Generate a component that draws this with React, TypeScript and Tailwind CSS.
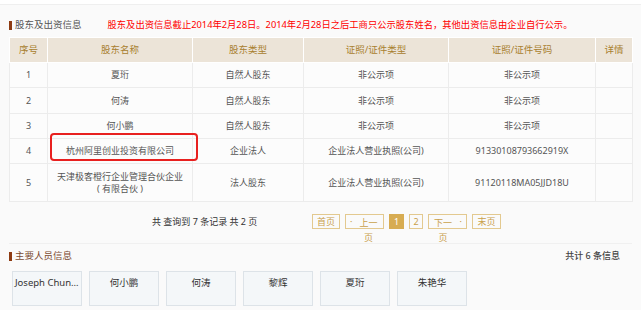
import React from "react";

const rows = [
  { no: "1", name: "夏珩", type: "自然人股东", certType: "非公示项", certNo: "非公示项", h: "h-[25px]" },
  { no: "2", name: "何涛", type: "自然人股东", certType: "非公示项", certNo: "非公示项", h: "h-[26px]" },
  { no: "3", name: "何小鹏", type: "自然人股东", certType: "非公示项", certNo: "非公示项", h: "h-[25px]" },
  { no: "4", name: "杭州阿里创业投资有限公司", type: "企业法人", certType: "企业法人营业执照(公司)", certNo: "91330108793662919X", h: "h-[25px]" },
];

const people = ["Joseph Chung Tsai", "何小鹏", "何涛", "黎辉", "夏珩", "朱艳华"];

function SectionTitle({ text, color }: { text: string; color: string }) {
  return (
    <div className="flex items-center h-[14px]">
      <span className="w-[3px] h-[9px] bg-[#8e3b12]" />
      <span className={`ml-[3px] text-[9.5px] leading-[14px] ${color}`}>{text}</span>
    </div>
  );
}

export default function App() {
  const cell = "border border-[#ececec] text-center align-middle px-[6px]";
  const head = "border border-white text-center align-middle text-[#a8802f] font-normal";

  return (
    <div className="relative w-[641px] h-[310px] overflow-hidden bg-[#fafafa] text-[#555] font-['Noto_Sans','Noto_Sans_CJK_SC',sans-serif]">
      <div className="h-[5px] bg-white border-b border-[#efefef]" />

      <div className="px-[9px] pt-[13px]">
        {/* 股东及出资信息 */}
        <div className="flex items-center">
          <SectionTitle text="股东及出资信息" color="text-[#555]" />
          <span className="ml-[26px] text-[9.3px] leading-[14px] text-[#ff0000] whitespace-nowrap">
            股东及出资信息截止2014年2月28日。2014年2月28日之后工商只公示股东姓名，其他出资信息由企业自行公示。
          </span>
        </div>

        <table className="mt-[5px] w-[623px] table-fixed border-collapse text-[9px]">
          <colgroup>
            <col className="w-[38px]" />
            <col className="w-[145px]" />
            <col className="w-[111px]" />
            <col className="w-[145px]" />
            <col className="w-[147px]" />
            <col className="w-[37px]" />
          </colgroup>
          <thead>
            <tr className="h-[25px] bg-[#ece4d8] text-[9.5px]">
              <th className={head}>序号</th>
              <th className={head}>股东名称</th>
              <th className={head}>股东类型</th>
              <th className={head}>证照/证件类型</th>
              <th className={head}>证照/证件号码</th>
              <th className={head}>详情</th>
            </tr>
          </thead>
          <tbody className="bg-[#fcfcfc]">
            {rows.map((r) => (
              <tr key={r.no} className={r.h}>
                <td className={cell}>{r.no}</td>
                <td className={cell}>{r.name}</td>
                <td className={cell}>{r.type}</td>
                <td className={cell}>{r.certType}</td>
                <td className={cell}>{r.certNo}</td>
                <td className={cell}></td>
              </tr>
            ))}
            <tr className="h-[38px]">
              <td className={cell}>5</td>
              <td className={`${cell} leading-[12px]`}>
                天津极客橙行企业管理合伙企业
                <br />
                ( 有限合伙 )
              </td>
              <td className={cell}>法人股东</td>
              <td className={cell}>企业法人营业执照(公司)</td>
              <td className={cell}>91120118MA05JJD18U</td>
              <td className={cell}></td>
            </tr>
          </tbody>
        </table>

        {/* pagination */}
        <div className="mt-[12px] flex items-start h-[30px] border-b border-[#f0f0f0]">
          <div className="ml-[143px] w-[150px] text-[9px] leading-[15px] text-[#333] whitespace-nowrap">
            共 查询到 7 条记录 共 2 页
          </div>
          <div className="ml-[10px] flex items-start gap-[5px] text-[9px] text-[#c9a04b]">
            <div className="w-[28px] h-[15px] border border-[#e3c98f] leading-[13px] text-center">首页</div>
            <div className="relative w-[39px] h-[15px] border border-[#e3c98f] pl-[12px] pr-[4px] leading-[15px] text-center">
              <span className="absolute left-[4px] top-0 leading-[13px]">·</span>
              上一页
            </div>
            <div className="w-[15px] h-[15px] bg-[#d7ac52] text-white leading-[15px] text-center">1</div>
            <div className="w-[14px] h-[15px] border border-[#e3c98f] leading-[13px] text-center">2</div>
            <div className="relative w-[39px] h-[15px] border border-[#e3c98f] pl-[3px] pr-[12px] leading-[15px] text-center">
              下一页
              <span className="absolute right-[4px] top-0 leading-[13px]">·</span>
            </div>
            <div className="w-[29px] h-[15px] border border-[#e3c98f] leading-[13px] text-center">末页</div>
          </div>
        </div>

        {/* 主要人员信息 */}
        <div className="mt-[5px] flex items-center justify-between pr-[12px]">
          <SectionTitle text="主要人员信息" color="text-[#7b4a30]" />
          <span className="text-[9px] leading-[14px] text-[#444] font-medium">共计 6 条信息</span>
        </div>

        <div className="mt-[8px] ml-[3px] flex gap-[7px]">
          {people.map((p) => (
            <div
              key={p}
              className="w-[70px] h-[35px] bg-[#f4f7f9] border border-[#dde3e8] px-[2px] pt-[5px] text-center text-[9.5px] leading-[12px] text-[#333] truncate"
            >
              {p}
            </div>
          ))}
        </div>
      </div>

      {/* annotation */}
      <div className="absolute left-[50px] top-[133px] w-[148px] h-[28px] border-2 border-[#e8201f] rounded-[4px]" />
    </div>
  );
}
